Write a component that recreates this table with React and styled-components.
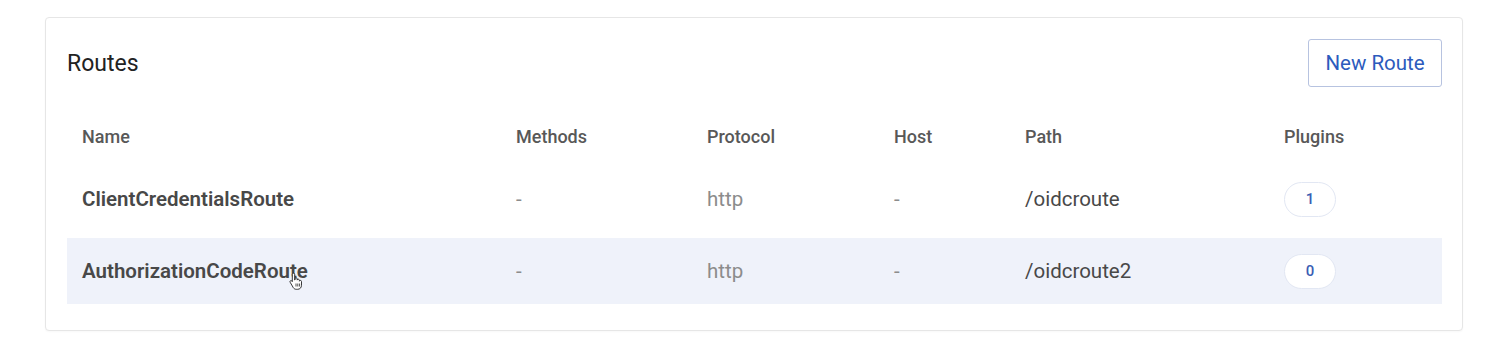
import React from "react";
import styled, { createGlobalStyle } from "styled-components";

const Global = createGlobalStyle`
  html, body { margin: 0; padding: 0; background: #ffffff; }
  body { font-family: Roboto, "Noto Sans", Arial, sans-serif; -webkit-font-smoothing: antialiased; }
`;

const Page = styled.div`
  padding: 17px 49px 17px 45px;
`;

const Card = styled.section`
  border: 1px solid #e6e6e6;
  border-radius: 4px;
  background: #fff;
  padding: 21px 20px 26px 21px;
  box-shadow: 0 1px 2px rgba(0, 0, 0, 0.03);
`;

const Header = styled.header`
  display: flex;
  align-items: center;
  justify-content: space-between;
  height: 48px;
  margin-bottom: 25px;
`;

const Title = styled.h2`
  margin: 0;
  font-size: 23px;
  font-weight: 400;
  color: #222;
`;

const Button = styled.button`
  height: 48px;
  width: 134px;
  border: 1px solid #b7c3e0;
  border-radius: 3px;
  background: #fff;
  color: #2c5bbd;
  font-family: inherit;
  font-size: 20.5px;
  font-weight: 400;
  cursor: pointer;
`;

const Table = styled.table`
  width: 100%;
  border-collapse: separate;
  border-spacing: 0 6px;
  margin: -6px 0;
  table-layout: fixed;
`;

const Th = styled.th`
  box-sizing: border-box;
  height: 48px;
  padding: 0 15px;
  text-align: left;
  font-size: 18px;
  font-weight: 500;
  color: #585858;
  width: ${(p) => p.$w}px;
`;

const Row = styled.tr`
  background: ${(p) => (p.$active ? "#eff2fa" : "transparent")};
`;

const Td = styled.td`
  position: relative;
  height: 66px;
  padding: 0 15px;
  font-size: 20.5px;
  font-weight: ${(p) => (p.$bold ? 600 : 400)};
  color: ${(p) => (p.$muted ? "#8c8c8c" : "#484848")};
  white-space: nowrap;
`;

const Badge = styled.span`
  display: inline-flex;
  align-items: center;
  justify-content: center;
  width: 52px;
  height: 35px;
  box-sizing: border-box;
  border: 1px solid #e2e7f3;
  border-radius: 18px;
  background: #fff;
  color: #3a5eb4;
  font-size: 15px;
  font-weight: 500;
`;

const Name = styled.span`
  position: relative;
`;

const Cursor = styled.svg`
  position: absolute;
  left: 207px;
  top: 13px;
  width: 14px;
  height: 18px;
`;

const columns = [
  { label: "Name", w: 434 },
  { label: "Methods", w: 191 },
  { label: "Protocol", w: 187 },
  { label: "Host", w: 131 },
  { label: "Path", w: 259 },
  { label: "Plugins", w: 173 },
];

const routes = [
  { name: "ClientCredentialsRoute", methods: "-", protocol: "http", host: "-", path: "/oidcroute", plugins: 1 },
  { name: "AuthorizationCodeRoute", methods: "-", protocol: "http", host: "-", path: "/oidcroute2", plugins: 0, active: true },
];

function HandCursor() {
  return (
    <Cursor viewBox="0 0 14 18">
      <path
        d="M4.5 1.2c.7 0 1.2.5 1.2 1.2V8l.3-.1V6.9c0-.7.5-1.1 1.1-1.1s1.1.4 1.1 1.1v1.2c.1-.6.6-.9 1.1-.9.6 0 1.1.4 1.1 1.1v.9c.1-.5.5-.8 1-.8.6 0 1.1.5 1.1 1.1v3.8c0 2.3-1.6 4-3.9 4H7.3c-1.3 0-2.3-.6-3-1.6L1.2 10.3c-.4-.5-.3-1.2.2-1.5.5-.4 1.1-.3 1.5.2l.4.6V2.4c0-.7.5-1.2 1.2-1.2z"
        fill="#fff"
        stroke="#222"
        strokeWidth="0.9"
        strokeLinejoin="round"
      />
      <path d="M7 11.5v3M8.8 11.5v3M10.6 11.5v3" stroke="#222" strokeWidth="0.8" />
    </Cursor>
  );
}

export default function App() {
  return (
    <>
      <Global />
      <Page>
        <Card>
          <Header>
            <Title>Routes</Title>
            <Button>New Route</Button>
          </Header>
          <Table>
            <thead>
              <tr>
                {columns.map((c) => (
                  <Th key={c.label} $w={c.w}>{c.label}</Th>
                ))}
              </tr>
            </thead>
            <tbody>
              {routes.map((r) => (
                <Row key={r.name} $active={r.active}>
                  <Td $bold>
                    <Name>
                      {r.name}
                      {r.active && <HandCursor />}
                    </Name>
                  </Td>
                  <Td $muted>{r.methods}</Td>
                  <Td $muted>{r.protocol}</Td>
                  <Td $muted>{r.host}</Td>
                  <Td>{r.path}</Td>
                  <Td>
                    <Badge>{r.plugins}</Badge>
                  </Td>
                </Row>
              ))}
            </tbody>
          </Table>
        </Card>
      </Page>
    </>
  );
}
